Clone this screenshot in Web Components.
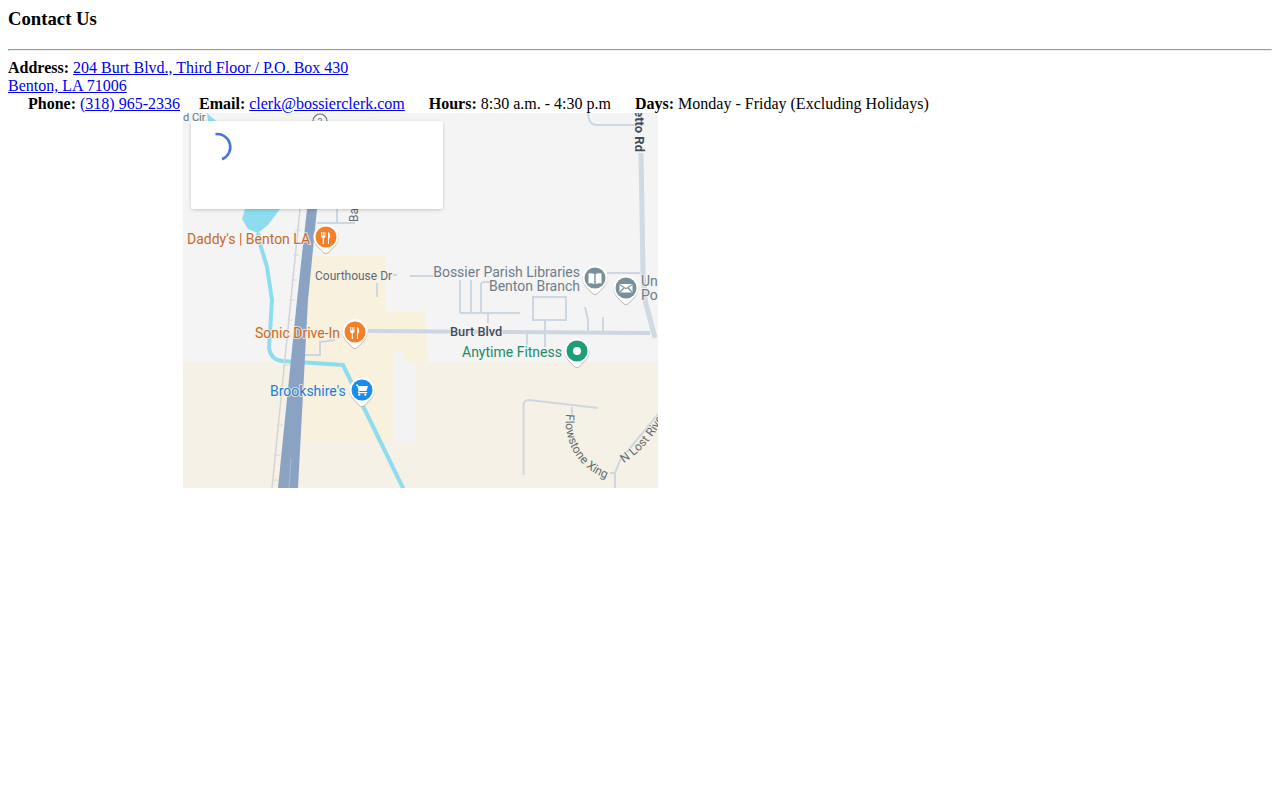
<!DOCTYPE html>
<html lang="en">
<head>
<meta charset="utf-8">
<title>Contact Us</title>
<style>
  body { margin: 8px; font: 16px "Liberation Serif", "Times New Roman", serif; color: #000; background: #fff; }
</style>
</head>
<body>
<contact-section heading="Contact Us">
  <postal-address>
    <a href="#">204 Burt Blvd., Third Floor / P.O. Box 430<br>Benton, LA 71006</a>
  </postal-address>
  <contact-row>
    <contact-field label="Phone:"><a href="#">(318) 965-2336</a></contact-field>
    <contact-field label="Email:" style="margin-left:19px"><a href="#">clerk@bossierclerk.com</a></contact-field>
    <contact-field label="Hours:" style="margin-left:24px">8:30 a.m. - 4:30 p.m</contact-field>
    <contact-field label="Days:" style="margin-left:24px">Monday - Friday (Excluding Holidays)</contact-field>
  </contact-row>
  <map-view>
    <map-pin kind="food" x="129" y="111"></map-pin>
    <map-pin kind="food" x="158" y="206"></map-pin>
    <map-pin kind="book" x="398" y="152"></map-pin>
    <map-pin kind="mail" x="429" y="162"></map-pin>
    <map-pin kind="gym" x="380" y="225"></map-pin>
    <map-pin kind="cart" x="165" y="264"></map-pin>
    <loading-card></loading-card>
  </map-view>
</contact-section>

<script>
class ContactSection extends HTMLElement {
  constructor() {
    super();
    this.attachShadow({ mode: 'open' }).innerHTML = `
      <style>
        :host { display: block; }
        h3 { margin: 0 0 18.72px; font-size: 18.72px; font-weight: bold; }
        hr { margin: 0 0 8px; }
      </style>
      <h3></h3>
      <hr>
      <slot></slot>`;
  }
  connectedCallback() {
    this.shadowRoot.querySelector('h3').textContent = this.getAttribute('heading');
  }
}

class PostalAddress extends HTMLElement {
  constructor() {
    super();
    this.attachShadow({ mode: 'open' }).innerHTML = `
      <style>:host { display: block; }</style>
      <b>Address:</b> <slot></slot>`;
  }
}

class ContactRow extends HTMLElement {
  constructor() {
    super();
    this.attachShadow({ mode: 'open' }).innerHTML = `
      <style>:host { display: flex; padding-left: 20px; white-space: nowrap; }</style>
      <slot></slot>`;
  }
}

class ContactField extends HTMLElement {
  constructor() {
    super();
    this.attachShadow({ mode: 'open' }).innerHTML = `
      <style>:host { display: block; }</style>
      <b></b> <slot></slot>`;
  }
  connectedCallback() {
    this.shadowRoot.querySelector('b').textContent = this.getAttribute('label');
  }
}

class LoadingCard extends HTMLElement {
  constructor() {
    super();
    this.attachShadow({ mode: 'open' }).innerHTML = `
      <style>
        :host {
          position: absolute; left: 8px; top: 8px;
          width: 252px; height: 88px;
          background: #fff; border-radius: 2px;
          box-shadow: 0 1px 4px -1px rgba(0, 0, 0, 0.3);
        }
        svg { display: block; }
      </style>
      <svg width="60" height="60" viewBox="0 0 60 60" fill="none">
        <path d="M24.5 13.2A13 13 0 0 1 31 38.2" stroke="#4a74dc" stroke-width="2.6"/>
      </svg>`;
  }
}

const pinIcons = {
  food: { color: '#f57f2a', icon: '<path d="M9.2 8v4.2c0 1 .7 1.7 1.5 1.9V20h1.2v-5.9c.8-.2 1.5-.9 1.5-1.9V8h-.9v3.6h-.8V8h-1v3.6h-.7V8zM16 8c1.3.4 2.2 2 2.2 3.8 0 1.3-.4 2.3-1.2 2.7V20h-1z" fill="#fff"/>' },
  book: { color: '#78909c', icon: '<path d="M7.5 8.5c2-.6 4.5-.5 5.8.5v10c-1.5-.8-3.8-1-5.8-.5zM20.5 8.5c-2-.6-4.5-.5-5.8.5v10c1.5-.8 3.8-1 5.8-.5z" fill="#fff"/>' },
  mail: { color: '#78909c', icon: '<path d="M7.5 9h13v8.5h-13z" fill="#fff"/><path d="M7.5 9.5l6.5 4.2 6.5-4.2M7.5 17.5l4.5-4.500M20.5 17.5l-4.500-4.500" fill="none" stroke="#78909c" stroke-width="1.1"/>' },
  gym: { color: '#1e9e78', icon: '<circle cx="14" cy="13" r="4" fill="#fff"/>' },
  cart: { color: '#1a8cf0', icon: '<path d="M8 7.5h2l.5 1.5h9.500l-1.500 5h-7l-.3 1h8v1.200H9.800l.8-2.500L9.200 8.700H8z" fill="#fff"/><circle cx="11.300" cy="17.700" r="1.100" fill="#fff"/><circle cx="17.300" cy="17.700" r="1.100" fill="#fff"/>' }
};

class MapPin extends HTMLElement {
  constructor() {
    super();
    this.attachShadow({ mode: 'open' });
  }
  connectedCallback() {
    const pin = pinIcons[this.getAttribute('kind')];
    const halo = 'M14 29Q12.500 29 11 27.500L5 21.500A12.500 12.500 0 1 1 23 21.500L17 27.500Q15.500 29 14 29Z';
    this.shadowRoot.innerHTML = `
      <style>
        :host { position: absolute; width: 28px; height: 32px; left: ${this.getAttribute('x')}px; top: ${this.getAttribute('y')}px; }
        svg { display: block; }
      </style>
      <svg width="28" height="32" viewBox="0 0 28 32">
        <path d="${halo}" fill="#bdb9b2" transform="translate(0 1)"/>
        <path d="${halo}" fill="#fff"/>
        <circle cx="14" cy="13" r="10.500" fill="${pin.color}"/>
        ${pin.icon}
      </svg>`;
  }
}

class MapView extends HTMLElement {
  constructor() {
    super();
    this.attachShadow({ mode: 'open' }).innerHTML = `
      <style>
        :host {
          display: block; position: relative; overflow: hidden;
          width: 475px; height: 375px; margin-left: 175px;
          background: #f4f4f4;
        }
        svg { display: block; }
        text { font-family: Roboto, "Liberation Sans", sans-serif; paint-order: stroke; stroke-linejoin: round; }
        .halo { stroke: #f4f4f4; stroke-width: 2px; stroke-opacity: .8; }
        .halo-warm { stroke: #f7f1e2; stroke-width: 2px; stroke-opacity: .8; }
        .street { fill: none; stroke: #cdd7e1; stroke-width: 2; }
        .arterial { fill: none; stroke: #cdd7e1; stroke-width: 4; }
      </style>
      <!-- viewBox is in page pixels so the map can be read against the screenshot -->
      <svg width="475" height="375" viewBox="183 113 475 375">
        <rect x="183" y="113" width="475" height="375" fill="#f4f4f4"/>
        <rect x="183" y="362" width="475" height="126" fill="#f5f1e6"/>
        <path d="M310 256H385V312H425L428 362H393V441H302L308 300Z" fill="#f8f1dd"/>
        <path d="M393 352H404V362H416V441H393Z" fill="#f3f3f3"/>

        <path d="M207 113L216 121H208Z" fill="#8ddcef"/>
        <path d="M245 209H280L268 225L258 233L248 229L242 219Z" fill="#8ddcef"/>
        <path d="M258 233L261 247L267 267L272 300L269 348Q271 360 282 361L343 365L404 490" fill="none" stroke="#8ddcef" stroke-width="4"/>

        <path d="M300 209L272 488" fill="none" stroke="#d4d4d4" stroke-width="1.500"/>
        <path d="M295 230H301M293 255H299M291 280H297M289 300H295M287 320H293M283 365H289M280 395H286M277 425H283M274 455H280M272 480H278" stroke="#d8d8d8" stroke-width="1"/>

        <path class="street" d="M337 209V223H317M337 223H355"/>
        <path class="street" d="M302 355H320V342L335 340"/>
        <path class="street" d="M393 275H397M410 276H433M377 283V297"/>
        <path class="street" d="M460 280V313M471 280V313M481 313V284Q481 282 486 282H492M460 313H520M488 313V323"/>
        <path class="street" d="M533 297H566V320H533ZM545 320V347M585 307L588 320V332M603 317V332M527 333V345"/>
        <path class="street" d="M607 273H640"/>
        <path class="street" d="M588 113Q588 124 596 125H634"/>
        <path class="street" d="M523.500 475V405Q523.500 400 529 400L598 408M572 407V415"/>
        <path class="street" d="M615 488V473H610M615 473L620 460L660 412"/>
        <path class="arterial" d="M368 331L650 333"/>
        <path d="M641 153L643 273L645 300L655 338" fill="none" stroke="#cfdae2" stroke-width="5"/>

        <path d="M307 209H317L308 300L298 488H278L297 300Z" fill="#8aa3c2"/>
        <path d="M291 458L289 488" fill="none" stroke="#a9bbd1" stroke-width="1"/>

        <circle cx="320" cy="121" r="7" fill="#f4f4f4" stroke="#5f6f7c" stroke-width="1.200"/>
        <text x="317.500" y="125" font-size="9" fill="#5f6f7c">3</text>
        <text x="183" y="121" font-size="11" fill="#6a7682" class="halo">d Cir</text>
        <text transform="translate(635 152) rotate(90)" text-anchor="end" font-size="13" font-weight="700" fill="#3f4d5e" class="halo">Palmetto Rd</text>
        <text transform="translate(358 222) rotate(-90)" font-size="12" fill="#5f6b78" class="halo">Bay</text>

        <text x="187" y="244" font-size="14" fill="#c8692a" class="halo">Daddy's | Benton LA</text>
        <text x="315" y="279.500" font-size="12" fill="#5f6b78" class="halo-warm">Courthouse Dr</text>
        <text x="580" y="277" text-anchor="end" font-size="14" fill="#6f7d8a" class="halo">Bossier Parish Libraries</text>
        <text x="580" y="291" text-anchor="end" font-size="14" fill="#6f7d8a" class="halo">Benton Branch</text>
        <text x="641" y="286" font-size="14" fill="#6f7d8a" class="halo">Un</text>
        <text x="641" y="300" font-size="14" fill="#6f7d8a" class="halo">Po</text>
        <text x="255" y="338" font-size="14" fill="#c8692a" class="halo-warm">Sonic Drive-In</text>
        <text x="450" y="336" font-size="12.800" font-weight="500" fill="#3f4d5e" class="halo">Burt Blvd</text>
        <text x="462" y="357" font-size="14" fill="#238a68" class="halo">Anytime Fitness</text>
        <text x="270" y="396" font-size="14" fill="#1a7fd8" class="halo-warm">Brookshire's</text>
        <path id="flowstone" d="M566 414C563 442 578 470 610 480" fill="none"/>
        <text font-size="12" fill="#5f6b78" class="halo-warm"><textPath href="#flowstone">Flowstone Xing</textPath></text>
        <path id="lost-river" d="M624 463C636 455 652 442 666 414" fill="none"/>
        <text font-size="12" fill="#5f6b78" class="halo-warm"><textPath href="#lost-river">N Lost River</textPath></text>
      </svg>
      <slot></slot>`;
  }
}

customElements.define('contact-section', ContactSection);
customElements.define('postal-address', PostalAddress);
customElements.define('contact-row', ContactRow);
customElements.define('contact-field', ContactField);
customElements.define('loading-card', LoadingCard);
customElements.define('map-pin', MapPin);
customElements.define('map-view', MapView);
</script>
</body>
</html>
